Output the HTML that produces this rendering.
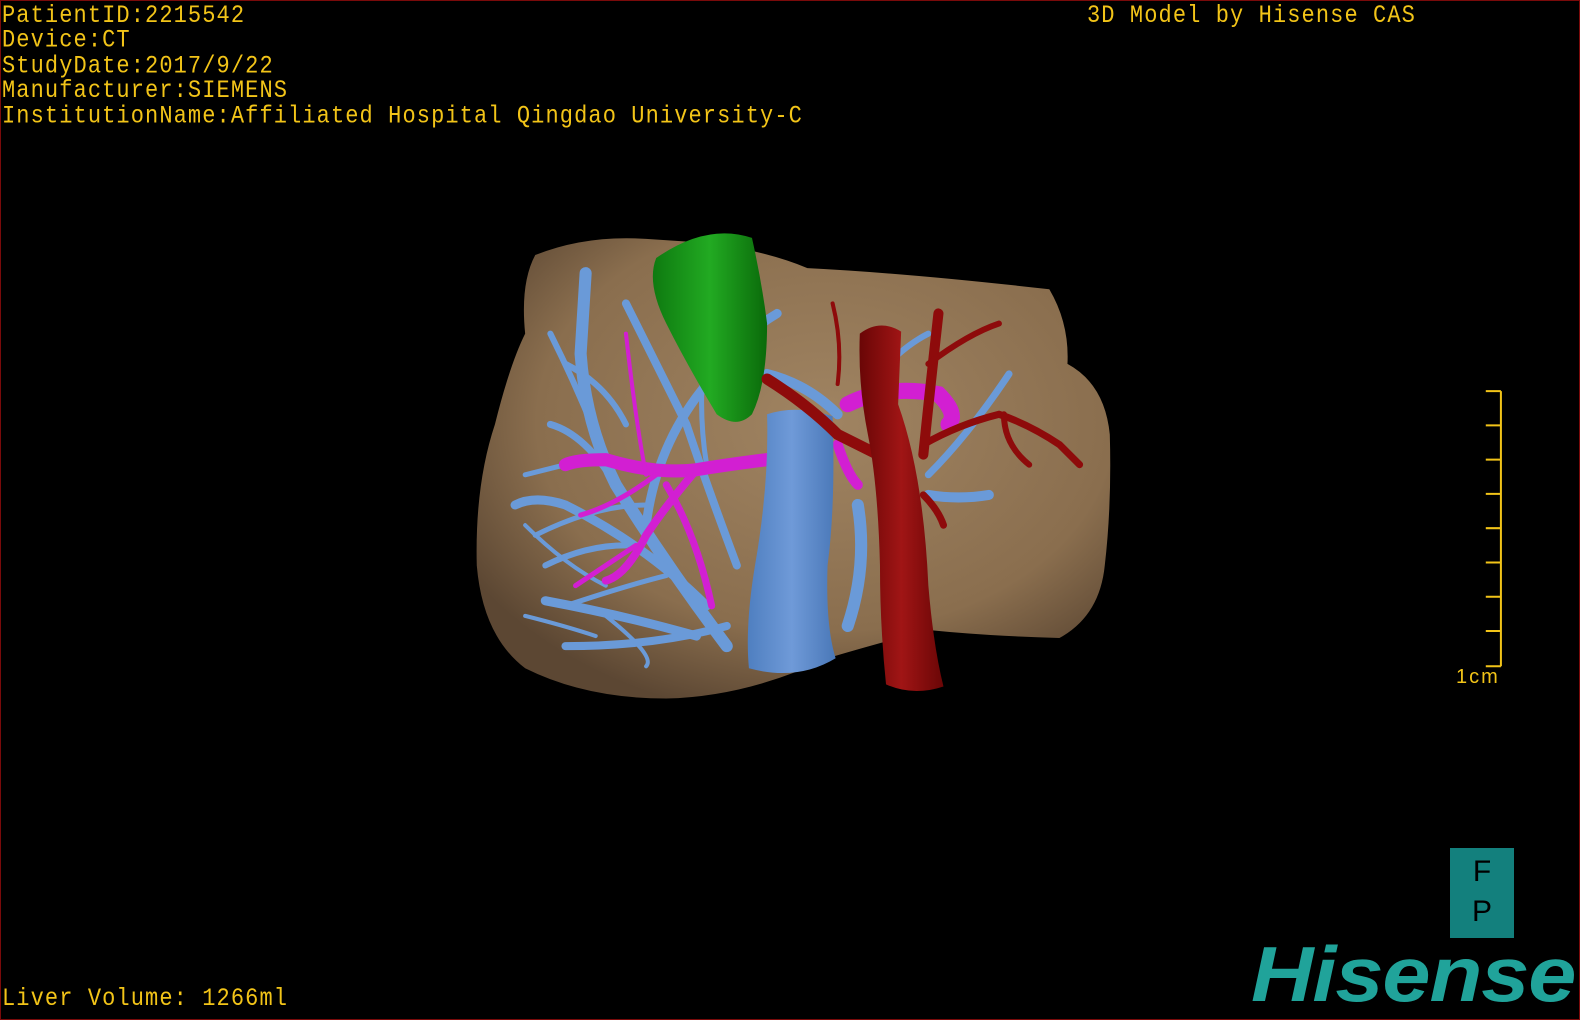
<!DOCTYPE html>
<html><head><meta charset="utf-8"><style>
html,body{margin:0;padding:0;background:#000;}
#w{position:relative;width:1580px;height:1020px;background:#000;overflow:hidden;box-sizing:border-box;border:1px solid #7a0a0a;}
.t{position:absolute;font-family:"Liberation Mono",monospace;font-size:22px;letter-spacing:1.1px;color:#f2c418;white-space:pre;line-height:22.4px;transform-origin:0 0;}
</style></head><body><div id="w">
<div class="t" style="left:1px;top:3px;transform:scaleY(1.12)">PatientID:2215542
Device:CT
StudyDate:2017/9/22
Manufacturer:SIEMENS
InstitutionName:Affiliated Hospital Qingdao University-C</div>
<div class="t" style="left:1086px;top:3px;transform:scaleY(1.12)">3D Model by Hisense CAS</div>
<div class="t" style="left:1px;top:986px;transform:scaleY(1.12)">Liver Volume: 1266ml</div>
<svg width="1580" height="1020" style="position:absolute;left:0;top:0">
<g transform="scale(1.008)">
<defs>
<radialGradient id="lg" cx="0.55" cy="0.4" r="0.65"><stop offset="0" stop-color="#a08462"/><stop offset="0.7" stop-color="#8a6e4e"/><stop offset="1" stop-color="#5c4733"/></radialGradient>
<linearGradient id="gb" x1="0" x2="1"><stop offset="0" stop-color="#0e7a10"/><stop offset="0.5" stop-color="#22aa22"/><stop offset="1" stop-color="#0a6a0a"/></linearGradient>
<linearGradient id="ivc" x1="0" x2="1"><stop offset="0" stop-color="#4f7fc0"/><stop offset="0.5" stop-color="#6f9ad8"/><stop offset="1" stop-color="#4a78b8"/></linearGradient>
<linearGradient id="ao" x1="0" x2="1"><stop offset="0" stop-color="#6a0606"/><stop offset="0.5" stop-color="#a01515"/><stop offset="1" stop-color="#6a0606"/></linearGradient>
</defs>
<path d="M530 252 Q580 232 640 236 L700 240 Q760 248 800 265 Q900 270 1040 286 Q1060 320 1058 360 Q1095 380 1100 430 Q1102 500 1095 560 Q1090 610 1050 632 Q980 630 920 624 Q860 640 820 652 Q740 690 660 692 Q580 692 520 662 Q478 630 472 560 Q470 480 490 420 Q505 360 520 330 Q515 280 530 252Z" fill="url(#lg)"/>
<g fill="none" stroke="#6a9ad8" stroke-linecap="round">
<path d="M720 640 Q660 560 610 480 Q580 420 575 350 Q578 300 580 270" stroke-width="12"/>
<path d="M700 600 Q640 540 560 500 Q530 490 510 500" stroke-width="9"/>
<path d="M690 630 Q620 610 540 595" stroke-width="9"/>
<path d="M720 620 Q650 640 560 640" stroke-width="8"/>
<path d="M610 480 Q580 430 545 420" stroke-width="7"/>
<path d="M640 520 Q650 440 700 380 Q720 340 770 310" stroke-width="9"/>
<path d="M620 300 Q650 360 680 420 Q700 480 730 560" stroke-width="8"/>
<path d="M560 360 Q600 380 620 420" stroke-width="6"/>
<path d="M540 560 Q580 540 620 540" stroke-width="6"/>
<path d="M520 470 Q560 460 600 450" stroke-width="5"/>
<path d="M530 530 Q590 500 640 500" stroke-width="5"/>
<path d="M560 600 Q620 580 660 570" stroke-width="5"/>
<path d="M545 330 Q570 380 590 430 Q600 470 640 520" stroke-width="6"/>
<path d="M520 520 Q560 560 600 580" stroke-width="4"/>
<path d="M600 610 Q650 650 640 660" stroke-width="4"/>
<path d="M700 330 Q690 400 700 460" stroke-width="5"/>
<path d="M520 610 Q560 620 590 630" stroke-width="4"/>
<path d="M840 620 Q860 560 850 500" stroke-width="12"/>
<path d="M920 490 Q950 495 980 490" stroke-width="10"/>
<path d="M920 470 Q960 430 1000 370" stroke-width="7"/>
<path d="M880 360 Q900 340 920 330" stroke-width="6"/>
<path d="M760 370 Q800 380 830 410" stroke-width="10"/>
</g>
<g fill="none" stroke="#d21fd2" stroke-linecap="round">
<path d="M760 455 Q720 460 690 465 Q650 470 600 455 Q570 455 560 460" stroke-width="13"/>
<path d="M690 465 Q660 500 640 530 Q620 570 600 575" stroke-width="8"/>
<path d="M660 480 Q690 530 705 600" stroke-width="7"/>
<path d="M640 470 Q630 420 620 330" stroke-width="4"/>
<path d="M650 470 Q610 500 575 510" stroke-width="5"/>
<path d="M630 540 Q600 560 570 580" stroke-width="5"/>
<path d="M840 400 Q880 380 930 390 Q950 410 940 420" stroke-width="16"/>
<path d="M830 440 Q840 470 850 480" stroke-width="10"/>
</g>
<path d="M650 255 Q700 220 745 235 Q755 280 760 320 Q760 380 745 410 Q730 425 710 410 Q680 360 660 320 Q640 280 650 255Z" fill="url(#gb)"/>
<path d="M760 410 Q790 400 825 412 Q828 500 820 560 Q818 620 828 652 Q790 675 742 662 Q738 620 748 560 Q762 480 760 410Z" fill="url(#ivc)"/>
<g fill="none" stroke="#8e0b0b" stroke-linecap="round">
<path d="M760 375 Q800 400 830 430 Q860 445 870 450" stroke-width="11"/>
<path d="M915 440 Q950 420 990 410 Q1020 420 1050 440 Q1060 450 1070 460" stroke-width="7"/>
<path d="M995 410 Q995 440 1020 460" stroke-width="6"/>
<path d="M915 450 Q920 400 930 310" stroke-width="10"/>
<path d="M920 360 Q960 330 990 320" stroke-width="6"/>
<path d="M830 380 Q835 340 825 300" stroke-width="4"/>
<path d="M915 490 Q930 505 935 520" stroke-width="7"/>
</g>
<path d="M852 330 Q872 315 893 328 L890 400 Q915 470 920 580 Q925 640 935 680 Q905 690 878 678 Q872 620 872 560 Q870 480 860 430 Q850 380 852 330Z" fill="url(#ao)"/>
<g stroke="#f2c418" stroke-width="2" fill="none">
<path d="M1488 387 V660 M1473 387 H1488 M1473 421 H1488 M1473 455 H1488 M1473 489 H1488 M1473 523 H1488 M1473 557 H1488 M1473 591 H1488 M1473 625 H1488 M1473 660 H1488"/>
</g>
</g>
</svg>
<div class="t" style="left:1455px;top:664px;font-family:'Liberation Sans',sans-serif;font-size:20px;line-height:25px;letter-spacing:2px">1cm</div>
<div style="position:absolute;left:1449px;top:847px;width:64px;height:90px;background:#13807d;color:#000;font-family:'Liberation Sans',sans-serif;font-size:30px;text-align:center;line-height:40px;padding-top:4px;box-sizing:border-box">F<br>P</div>
<div style="position:absolute;left:1250px;top:934px;font-family:'Liberation Sans',sans-serif;font-weight:bold;font-style:italic;font-size:78px;color:#20a39a;line-height:78px;letter-spacing:-1px;transform:scaleX(1.11);transform-origin:0 0">Hisense</div>
</div></body></html>
